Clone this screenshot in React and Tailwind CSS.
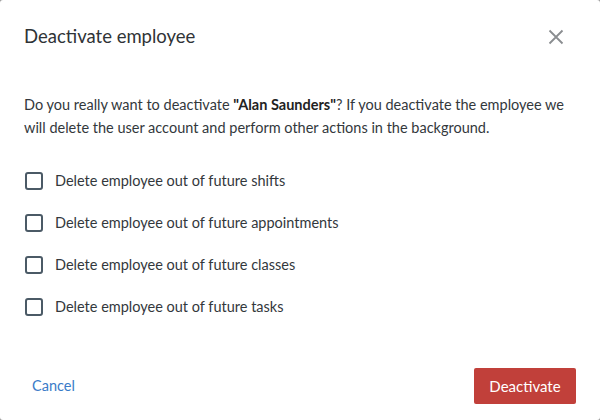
import { useState } from "react";

const opciones = [
  "Delete employee out of future shifts",
  "Delete employee out of future appointments",
  "Delete employee out of future classes",
  "Delete employee out of future tasks",
];

export default function App() {
  const [marcados, setMarcados] = useState([false, false, false, false]);

  const toggle = (i) => {
    const copia = [...marcados];
    copia[i] = !copia[i];
    setMarcados(copia);
  };

  return (
    <div className="w-[600px] h-[420px] bg-[#9a9a9a]" style={{ fontFamily: "Lato, 'Open Sans', sans-serif" }}>
      <div className="w-full h-full bg-white rounded-[3px] flex flex-col">
        {/* Header */}
        <div className="flex items-center justify-between pl-6 pr-[36px] pt-[20px] h-[62px]">
          <h2 className="text-[18.5px] text-[#2f3336] leading-none pb-[10px]">Deactivate employee</h2>
          <button className="text-[#8a8d90] pb-[8px]">
            <svg width="16" height="16" viewBox="0 0 16 16" fill="none" stroke="currentColor" strokeWidth="1.8">
              <path d="M1.5 1.5l13 13M14.5 1.5l-13 13" />
            </svg>
          </button>
        </div>

        {/* Body */}
        <div className="px-6 pt-[31px]">
          <p className="text-[14.5px] leading-[23px] text-[#33383c]">
            Do you really want to deactivate <b className="font-bold text-[#222]">"Alan Saunders"</b>? If you deactivate the employee we
            <br />
            will delete the user account and perform other actions in the background.
          </p>

          <div className="flex flex-col gap-[24px] mt-[33px] pl-px">
            {opciones.map((texto, i) => (
              <label key={texto} className="flex items-center gap-[12px] cursor-pointer" onClick={() => toggle(i)}>
                <span
                  className={`w-[18px] h-[18px] rounded-[3px] border-2 border-[#4b5a66] ${
                    marcados[i] ? "bg-[#4b5a66]" : "bg-white"
                  }`}
                ></span>
                <span className="text-[14.5px] leading-[18px] text-[#33383c]">{texto}</span>
              </label>
            ))}
          </div>
        </div>

        {/* Footer */}
        <div className="mt-auto flex items-center justify-between pl-[32px] pr-[24px] pb-[16px]">
          <button className="text-[14.5px] text-[#3a7bc8]">Cancel</button>
          <button className="w-[102px] h-[36px] rounded-[2px] bg-[#c1403a] text-white text-[15px]">Deactivate</button>
        </div>
      </div>
    </div>
  );
}
